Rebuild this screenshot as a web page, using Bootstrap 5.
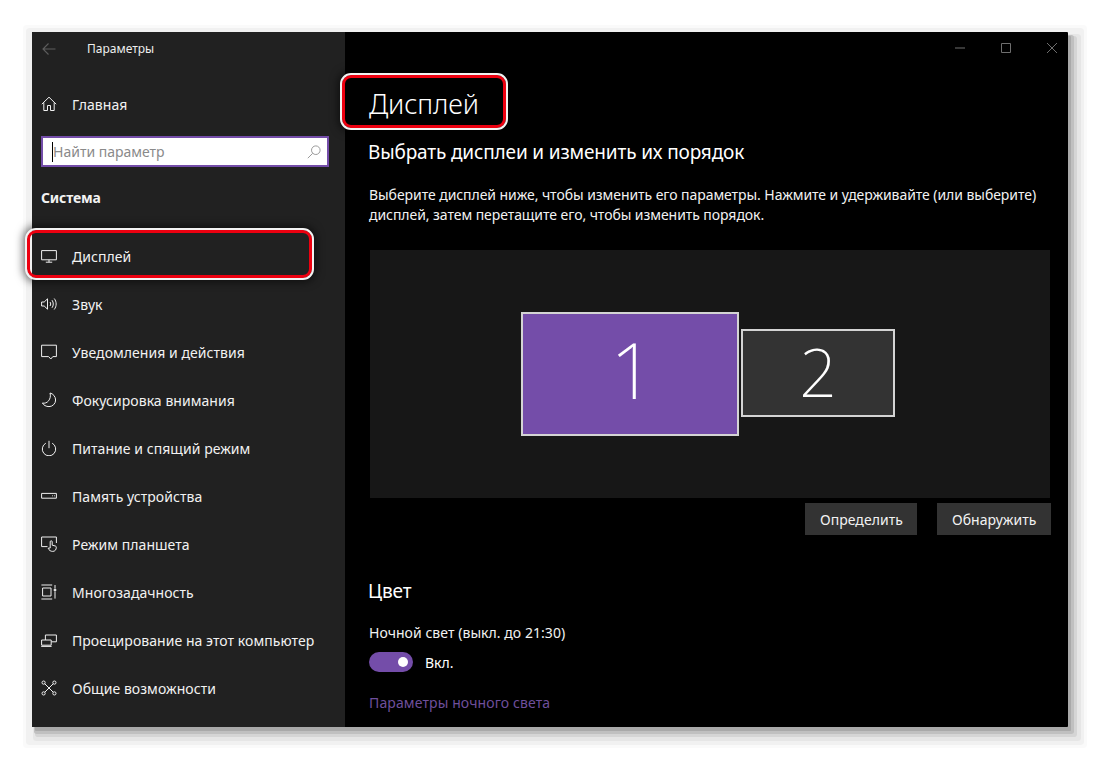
<!DOCTYPE html>
<html lang="ru">
<head>
<meta charset="utf-8">
<title>Параметры</title>
<link href="https://cdn.jsdelivr.net/npm/bootstrap@5.3.0/dist/css/bootstrap.min.css" rel="stylesheet">
<style>
html,body{height:100%;margin:0;background:#fff;overflow:hidden}
body{font-family:"Noto Sans","Open Sans",sans-serif;font-size:14px;padding:32px;color:#fff}
.win-frame{position:relative;width:1036px;height:695px;background:#000;border-radius:1px;box-shadow:3px 4px 0 0 #a9a9a9,4px 5px 0 2px #c0c0c0,6px 7px 0 3px #d5d5d5,7px 8px 0 6px #e6e6e6,5px 7px 0 11px #f1f1f1,5px 7px 0 14px #fafafa}
.side-pane{width:313px;height:695px;background:#212121;flex:none}
.title-row{height:32px;padding-left:9px;padding-top:2px}
.title-row .app-name{font-size:12px;margin-left:30px;color:#eee}
.nav-line{height:48px;padding-left:9px;color:#f2f2f2;font-size:14px;letter-spacing:.05px}
.nav-line svg{width:16px;height:16px;flex:none;margin-right:15px}
.glyph{fill:none;stroke:#f0f0f0;stroke-width:1}
.home-line{margin-top:16px}
.find-box{margin:8px 16px 0 9px;height:31px;background:#fff;border:2px solid #744da9;color:#8a8a8a;padding:0 6px 0 10px;font-size:14px;position:relative}
.find-box::before{content:"";position:absolute;left:9px;top:4px;height:20px;width:1px;background:#000}
.find-box svg{width:14px;height:14px}
.group-name{font-weight:700;font-size:14px;margin:15px 0 0 9px;height:30px;letter-spacing:-.2px;color:#f2f2f2}
.nav-list{margin-top:20px}
.main-pane{padding:0 17px 0 24px;min-width:0;position:relative}
.ctrl-row{height:32px;margin-right:-17px;gap:14px}
.ctrl-row svg{width:12px;height:12px;stroke:#6e6e6e;fill:none}
.ctrl-row span{width:32px;display:flex;justify-content:center}
.page-h{font-size:27px;line-height:40px;margin:20px 0 0 0;font-weight:300;letter-spacing:-.1px}
.sec-h{font-size:19px;line-height:28px;margin:14px 0 0 -1px;font-weight:400;letter-spacing:-.15px}
.body-txt{font-size:14px;line-height:20px;margin:19px 0 0 0;color:#f2f2f2;letter-spacing:-.06px;width:690px}
.screen-area{margin:25px 0 0 1px;height:248px;width:680px;background:#171717;padding-left:151px;padding-top:62px;gap:2px}
.mon{border:2px solid #d4d4d4;display:flex;align-items:center;justify-content:center;font-weight:200}
.mon-a{width:218px;height:124px;background:#744da9;font-size:78px;padding:0 0 10px 5px}
.mon-b{width:154px;height:88px;background:#333;font-size:66px;margin-top:17px;padding-bottom:4px}
.act-row{margin-top:5px;gap:20px;width:682px}
.act-btn{height:32px;background:#333;color:#f2f2f2;border:0;border-radius:0;font-size:14px;padding:0 14.5px;letter-spacing:.05px}
.color-h{font-size:19px;line-height:28px;margin:42px 0 0 -1px;letter-spacing:-.1px;font-weight:400}
.night-lab{margin:18px 0 0 0;line-height:20px;letter-spacing:.05px;color:#f2f2f2}
.tog-row{margin-top:9px;gap:12px;height:20px}
.tog{width:44px;height:20px;background:#744da9;border-radius:10px;position:relative;flex:none}
.tog::after{content:"";position:absolute;right:5px;top:5px;width:10px;height:10px;background:#fff;border-radius:50%}
.night-link{display:block;margin-top:21px;color:#6f4f9c;text-decoration:none;line-height:20px;letter-spacing:.12px}
.red-mark{position:absolute;border:3px solid #ed0010;border-radius:9px;outline:2px solid #f2f2f2;box-shadow:0 0 8px 4px rgba(0,0,0,.55);pointer-events:none}
.mark-side{left:-5px;top:198px;width:285px;height:48px}
.mark-head{left:310px;top:43px;width:164px;height:53px}
</style>
</head>
<body>
<div class="win-frame d-flex">
  <aside class="side-pane d-flex flex-column">
    <div class="title-row d-flex align-items-center">
      <svg width="16" height="16" viewBox="0 0 16 16" fill="none" stroke="#5e5e5e" stroke-width="1.1"><path d="M14.5 8H2M7.5 2.5 2 8l5.5 5.5"/></svg>
      <span class="app-name">Параметры</span>
    </div>
    <div class="nav-line home-line d-flex align-items-center">
      <svg class="glyph" viewBox="0 0 16 16"><path d="M.8 8.2 8 1.2l7.2 7M2.8 6.5v8h3.7V9.5h3v5h3.7v-8"/></svg>
      <span>Главная</span>
    </div>
    <div class="find-box d-flex align-items-center justify-content-between">
      <span>Найти параметр</span>
      <svg viewBox="0 0 14 14" fill="none" stroke="#9a9a9a" stroke-width="1"><circle cx="8.8" cy="5.2" r="4.3"/><path d="M5.7 8.3 .8 13.2"/></svg>
    </div>
    <div class="group-name d-flex align-items-center">Система</div>
    <div class="nav-list">
      <div class="nav-line d-flex align-items-center">
        <svg class="glyph" viewBox="0 0 16 16"><path d="M.6 2.6h14.8v9.2H.6zM8 11.8v2.4M4.8 14.2h6.4"/></svg><span>Дисплей</span>
      </div>
      <div class="nav-line d-flex align-items-center">
        <svg class="glyph" viewBox="0 0 16 16"><path d="M.6 6h2.6l3.3-3.2v10.4L3.2 10H.6zM9 6c.9 1.2.9 2.8 0 4M11 4.2c1.7 2.2 1.7 5.4 0 7.6M13.2 2.5c2.6 3.2 2.6 7.8 0 11"/></svg><span>Звук</span>
      </div>
      <div class="nav-line d-flex align-items-center">
        <svg class="glyph" viewBox="0 0 16 16"><path d="M.6 1.2h14.8v11.4h-3.6l-2 2.4-2.2-2.4h-7z"/></svg><span>Уведомления и действия</span>
      </div>
      <div class="nav-line d-flex align-items-center">
        <svg class="glyph" viewBox="0 0 16 16"><path d="M9 1c3 .6 5.6 3.6 5.6 7A6.6 6.6 0 0 1 8 14.6c-3 0-5.4-1.4-6.6-3.6 4.6 1.4 9.4-4 7.6-10z"/></svg><span>Фокусировка внимания</span>
      </div>
      <div class="nav-line d-flex align-items-center">
        <svg class="glyph" viewBox="0 0 16 16"><path d="M8 .8v7.4M4.8 3.2a6.7 6.7 0 1 0 6.4 0"/></svg><span>Питание и спящий режим</span>
      </div>
      <div class="nav-line d-flex align-items-center">
        <svg class="glyph" viewBox="0 0 16 16"><path d="M.6 5.4h14.8v4.8H.6zM11 7.8h.8M13 7.8h.8"/></svg><span>Память устройства</span>
      </div>
      <div class="nav-line d-flex align-items-center">
        <svg class="glyph" viewBox="0 0 16 16"><path d="M6.5 10.6H.6V1h14.8v6M9.2 12V5.8a1 1 0 0 1 2 0v3.4l3.2.8c.6.2.9.6.9 1.2 0 2.6-1.4 4.2-3.6 4.2-2 0-3.6-1-4.6-3.2z"/></svg><span>Режим планшета</span>
      </div>
      <div class="nav-line d-flex align-items-center">
        <svg class="glyph" viewBox="0 0 16 16"><path d="M.4 1h10.8M.4 15h10.8M1.6 4h8.4v8H1.6zM14 1v3.4M14 7.6v7"/><circle cx="14" cy="6" r="1" fill="#f0f0f0"/></svg><span>Многозадачность</span>
      </div>
      <div class="nav-line d-flex align-items-center">
        <svg class="glyph" viewBox="0 0 16 16"><path d="M4.4 8V3h11v6.8h-5M.6 8h9.6v5.2H.6zM.2 14.4h10.4"/></svg><span>Проецирование на этот компьютер</span>
      </div>
      <div class="nav-line d-flex align-items-center">
        <svg class="glyph" viewBox="0 0 16 16"><circle cx="2.6" cy="2.6" r="1.6"/><circle cx="13.4" cy="2.6" r="1.6"/><circle cx="2.6" cy="13.4" r="1.6"/><circle cx="13.4" cy="13.4" r="1.6"/><path d="M3.8 3.8l8.4 8.4M12.2 3.8l-8.4 8.4"/></svg><span>Общие возможности</span>
      </div>
    </div>
  </aside>
  <main class="main-pane flex-grow-1">
    <div class="ctrl-row d-flex justify-content-end align-items-center">
      <span><svg viewBox="0 0 12 12"><path d="M1 6h10"/></svg></span>
      <span><svg viewBox="0 0 12 12"><path d="M1.5 1.5h9v9h-9z"/></svg></span>
      <span><svg viewBox="0 0 12 12"><path d="M1 1l10 10M11 1 1 11"/></svg></span>
    </div>
    <h1 class="page-h">Дисплей</h1>
    <h2 class="sec-h">Выбрать дисплеи и изменить их порядок</h2>
    <p class="body-txt">Выберите дисплей ниже, чтобы изменить его параметры. Нажмите и удерживайте (или выберите) дисплей, затем перетащите его, чтобы изменить порядок.</p>
    <div class="screen-area d-flex align-items-start">
      <div class="mon mon-a">1</div>
      <div class="mon mon-b">2</div>
    </div>
    <div class="act-row d-flex justify-content-end">
      <button type="button" class="btn act-btn">Определить</button>
      <button type="button" class="btn act-btn">Обнаружить</button>
    </div>
    <h2 class="color-h">Цвет</h2>
    <p class="night-lab">Ночной свет (выкл. до 21:30)</p>
    <div class="tog-row d-flex align-items-center"><span class="tog"></span><span>Вкл.</span></div>
    <a class="night-link" href="#">Параметры ночного света</a>
  </main>
  <div class="red-mark mark-side"></div>
  <div class="red-mark mark-head"></div>
</div>
<script src="https://cdn.jsdelivr.net/npm/bootstrap@5.3.0/dist/js/bootstrap.bundle.min.js"></script>
</body>
</html>
